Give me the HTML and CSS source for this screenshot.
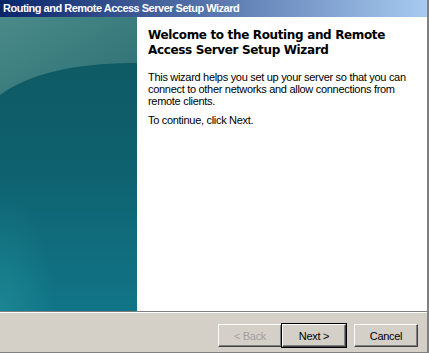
FILE: index.html
```html
<!DOCTYPE html>
<html lang="en">
<head>
  <meta charset="UTF-8">
  <title>Routing and Remote Access Server Setup Wizard</title>
  <link rel="stylesheet" href="styles.css">
</head>
<body>
  <div class="window">
    <div class="titlebar">Routing and Remote Access Server Setup Wizard</div>

    <div class="main">
      <!-- teal watermark panel -->
      <div class="side">
        <svg width="137" height="294" viewBox="0 0 137 294" preserveAspectRatio="none">
          <defs>
            <linearGradient id="base" x1="0" y1="0" x2="0" y2="1">
              <stop offset="0" stop-color="#0e5760"/>
              <stop offset="0.5" stop-color="#0e616e"/>
              <stop offset="1" stop-color="#117588"/>
            </linearGradient>
            <linearGradient id="cap" x1="0" y1="0" x2="1" y2="1">
              <stop offset="0" stop-color="#4a8b89"/>
              <stop offset="1" stop-color="#2d6f74"/>
            </linearGradient>
            <radialGradient id="glow" cx="0" cy="1" r="0.4">
              <stop offset="0" stop-color="#2aa0a4" stop-opacity="0.4"/>
              <stop offset="1" stop-color="#2aa0a4" stop-opacity="0"/>
            </radialGradient>
          </defs>
          <rect width="137" height="294" fill="url(#base)"/>
          <rect width="137" height="294" fill="url(#glow)"/>
          <path d="M0 0 H137 V46 C90 46 35 52 0 78 Z" fill="url(#cap)"/>
        </svg>
      </div>

      <div class="content">
        <h1>Welcome to the Routing and Remote Access Server Setup Wizard</h1>
        <p>This wizard helps you set up your server so that you can connect to other networks and allow connections from remote clients.</p>
        <p>To continue, click Next.</p>
      </div>
    </div>

    <div class="footer">
      <button class="btn" disabled>&lt; Back</button>
      <button class="btn default">Next &gt;</button>
      <button class="btn cancel">Cancel</button>
    </div>
  </div>
</body>
</html>
```

FILE: styles.css
```css
html, body {
  margin: 0;
  padding: 0;
  background: #d4d0c8;
}
.window {
  width: 429px;
  height: 353px;
  box-sizing: border-box;
  border-right: 2px solid #808080;
  border-bottom: 1px solid #808080;
  background: #d4d0c8;
  font-family: Tahoma, "Liberation Sans", Arial, sans-serif;
  font-size: 11px;
}
.titlebar {
  height: 17px;
  line-height: 17px;
  padding-left: 3px;
  color: white;
  font-weight: bold;
  letter-spacing: -0.5px;
  background: linear-gradient(to right, #0a246a, #a6caf0);
}
.main {
  display: flex;
  height: 294px;
  background: white;
  border-bottom: 1px solid #808080;
}
.side {
  width: 137px;
  height: 294px;
}
.side svg {
  display: block;
}
.content {
  flex: 1;
  padding: 11px 12px 0 11px;
}
h1 {
  margin: 0 0 13px;
  font-family: "DejaVu Sans", Verdana, sans-serif;
  font-size: 12px;
  line-height: 15px;
  font-weight: bold;
  letter-spacing: -0.35px;
  color: #000;
}
p {
  margin: 0 0 7px;
  font-size: 11px;
  line-height: 12px;
  letter-spacing: -0.3px;
  color: #000;
}
.footer {
  display: flex;
  justify-content: flex-end;
  padding: 11px 9px 0 0;
  border-top: 1px solid white;
}
.btn {
  width: 64px;
  height: 23px;
  margin: 0;
  padding: 0;
  font-family: Tahoma, "Liberation Sans", Arial, sans-serif;
  font-size: 11px;
  letter-spacing: -0.3px;
  color: #000;
  background: #d4d0c8;
  border: 1px solid;
  border-color: #fff #404040 #404040 #fff;
  box-shadow: inset -1px -1px 0 #808080;
}
.btn:disabled {
  color: #a0a0a0;
}
.btn.default {
  outline: 1px solid #000;
}
.btn.cancel {
  margin-left: 8px;
}
```
